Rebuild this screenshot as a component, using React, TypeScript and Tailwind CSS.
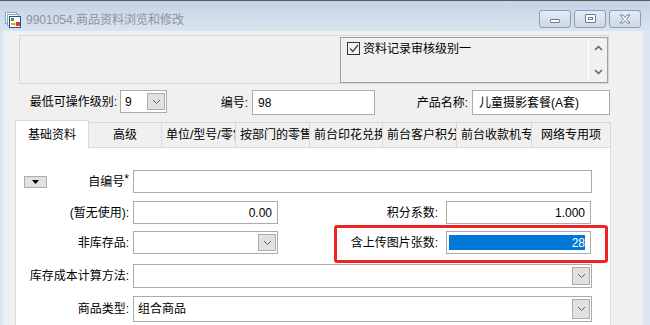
import React from "react";

const FONT = { fontFamily: '"Liberation Sans","Noto Sans CJK SC",sans-serif' };

function Chevron() {
  return (
    <svg width="9" height="6" viewBox="0 0 9 6">
      <polyline points="1,1 4.5,4.5 8,1" fill="none" stroke="#606060" strokeWidth="1" />
    </svg>
  );
}

function DropBtn() {
  return (
    <div className="absolute right-[1px] top-[2px] bottom-[2px] w-[18px] bg-[#e1e1e1] border border-[#acacac] flex items-center justify-center">
      <Chevron />
    </div>
  );
}

function Select({ w, h = "h-[23px]", value }: { w: string; h?: string; value?: string }) {
  return (
    <div className={`relative ${w} ${h} bg-white border border-[#ababab] flex items-center pl-[4px] text-[12px] text-black`}>
      {value}
      <DropBtn />
    </div>
  );
}

function TitleIcon() {
  return (
    <svg width="16" height="16" viewBox="0 0 16 16">
      <rect x="0.5" y="0.5" width="11" height="11" fill="#f4f7fb" stroke="#8ea3bd" />
      <rect x="2.5" y="2.5" width="11" height="11" fill="#f4f7fb" stroke="#8ea3bd" />
      <rect x="4.5" y="4.5" width="11" height="11" fill="#ffffff" stroke="#2a4f9a" />
      <rect x="6" y="6" width="3" height="3" fill="#3aa83a" />
      <path d="M6 11 L9 11 L9 9.5 L11 12 L9 14.5 L9 13 L6 13 Z" fill="#e0b020" />
      <rect x="11" y="10" width="4" height="4" fill="#d83a2a" />
    </svg>
  );
}

function WinBtn({ kind }: { kind: "min" | "max" | "close" }) {
  return (
    <div className="w-[32px] h-[18px] rounded-[3px] border border-[#8d9db2] bg-gradient-to-b from-[#e4ecf5] to-[#cdd9e7] flex items-center justify-center">
      {kind === "min" && <div className="w-[10px] h-[4px] bg-white border border-[#6f7a88] rounded-[1px] mt-[4px]" />}
      {kind === "max" && (
        <div className="w-[11px] h-[9px] bg-white border border-[#6f7a88] rounded-[1px] flex items-center justify-center">
          <div className="w-[5px] h-[3px] border border-[#6f7a88]" />
        </div>
      )}
      {kind === "close" && (
        <svg width="14" height="10" viewBox="0 0 14 10">
          <path d="M2 1 L5 1 L7 3.5 L9 1 L12 1 L8.5 5 L12 9 L9 9 L7 6.5 L5 9 L2 9 L5.5 5 Z" fill="#fff" stroke="#6f7a88" strokeWidth="0.9" />
        </svg>
      )}
    </div>
  );
}

const tabs: { t: string; w: string }[] = [
  { t: "基础资料", w: "w-[74px]" },
  { t: "高级", w: "w-[73px]" },
  { t: "单位/型号/零售价", w: "w-[74px]" },
  { t: "按部门的零售价", w: "w-[74px]" },
  { t: "前台印花兑换", w: "w-[73px]" },
  { t: "前台客户积分", w: "w-[74px]" },
  { t: "前台收款机专用", w: "w-[75px]" },
  { t: "网络专用项", w: "w-[79px]" },
];

export default function App() {
  return (
    <div style={FONT} className="w-[650px] h-[325px] overflow-hidden flex flex-col bg-[#dbe6f3] text-black">
      {/* Title bar */}
      <div className="h-[31px] shrink-0 border-t border-[#5c5c5c] bg-gradient-to-b from-[#c3d3e5] to-[#d9e4f1] flex items-center">
        <div className="ml-[5px] mt-[8px]">
          <TitleIcon />
        </div>
        <div className="ml-[5px] mt-[8px] text-[12px] text-[#8e9399] leading-none">9901054.商品资料浏览和修改</div>
        <div className="ml-auto mr-[9px] mt-[5px] flex gap-[3px]">
          <WinBtn kind="min" />
          <WinBtn kind="max" />
          <WinBtn kind="close" />
        </div>
      </div>

      {/* Body */}
      <div className="flex-1 flex">
        <div className="w-[3px] bg-[#dbe6f3]" />
        <div className="w-[640px] bg-[#f0f0f0] flex flex-col">
          {/* Group frame */}
          <div className="ml-[16px] mt-[4px] w-[590px] h-[49px] border border-[#d6d6d6] flex justify-end items-start pt-[1px]">
            <div className="w-[268px] h-[46px] border border-[#a0a0a0] flex bg-[#f0f0f0]">
              <div className="flex-1 flex items-start pt-[3px] pl-[6px]">
                <div className="w-[13px] h-[13px] border border-[#333] bg-[#f4f4f4] flex items-center justify-center mt-[1px]">
                  <svg width="10" height="9" viewBox="0 0 10 9">
                    <polyline points="1,4.5 3.8,7.5 9,1" fill="none" stroke="#444" strokeWidth="1.3" />
                  </svg>
                </div>
                <span className="ml-[3px] text-[12px] leading-[16px]">资料记录审核级别一</span>
              </div>
              <div className="w-[19px] border-l border-white flex flex-col items-center justify-between py-[7px]">
                <svg width="9" height="6" viewBox="0 0 9 6">
                  <polyline points="1,5 4.5,1.5 8,5" fill="none" stroke="#606060" strokeWidth="1.5" />
                </svg>
                <svg width="9" height="6" viewBox="0 0 9 6">
                  <polyline points="1,1 4.5,4.5 8,1" fill="none" stroke="#606060" strokeWidth="1.5" />
                </svg>
              </div>
            </div>
          </div>

          {/* Row 1 */}
          <div className="mt-[6px] flex items-start text-[12px]">
            <div className="w-[17px]" />
            <div className="w-[97px] h-[23px] flex items-center justify-end">最低可操作级别:</div>
            <div className="ml-[3px] relative w-[47px] h-[23px] bg-white border border-[#ababab] flex items-center pl-[4px]">
              9
              <DropBtn />
            </div>
            <div className="w-[81px] h-[25px] flex items-center justify-end">编号:</div>
            <div className="ml-[4px] w-[123px] h-[25px] bg-white border border-[#ababab] flex items-center pl-[5px]">98</div>
            <div className="w-[93px] h-[25px] flex items-center justify-end">产品名称:</div>
            <div className="ml-[4px] w-[138px] h-[25px] bg-white border border-[#ababab] flex items-center pl-[6px]">儿童摄影套餐(A套)</div>
          </div>

          {/* Tabs */}
          <div className="mt-[5px] ml-[12px] flex items-end text-[12px]">
            {tabs.map((tab, i) =>
              i === 0 ? (
                <div
                  key={i}
                  className={`${tab.w} h-[28px] -mb-px relative z-10 bg-white border border-b-0 border-[#d9d9d9] flex items-center justify-center whitespace-nowrap overflow-hidden`}
                >
                  {tab.t}
                </div>
              ) : (
                <div
                  key={i}
                  className={`${tab.w} h-[25px] bg-[#f0f0f0] border border-b-0 border-l-0 border-[#d9d9d9] leading-[25px] text-center px-[4px] whitespace-nowrap overflow-hidden`}
                >
                  {tab.t}
                </div>
              )
            )}
          </div>

          {/* Panel */}
          <div className="ml-[12px] w-[596px] flex-1 bg-white border border-b-0 border-[#d9d9d9] pt-[22px] text-[12px]">
            {/* Row A */}
            <div className="flex items-center h-[23px]">
              <div className="w-[113px] flex items-center">
                <div className="ml-[8px] w-[23px] h-[12px] bg-[#e1e1e1] border border-[#adadad] flex items-center justify-center">
                  <svg width="7" height="4" viewBox="0 0 7 4">
                    <polygon points="0,0 7,0 3.5,4" fill="#000" />
                  </svg>
                </div>
                <div className="flex-1 text-right">
                  自编号<span className="relative top-[-3px]">*</span>
                </div>
              </div>
              <div className="ml-[4px] w-[459px] h-[23px] bg-white border border-[#ababab]" />
            </div>

            {/* Row B */}
            <div className="mt-[8px] flex items-center h-[23px]">
              <div className="w-[113px] text-right">(暂无使用):</div>
              <div className="ml-[4px] w-[145px] h-[23px] bg-white border border-[#ababab] flex items-center justify-end pr-[5px]">0.00</div>
              <div className="w-[160px] text-right">积分系数:</div>
              <div className="ml-[8px] w-[145px] h-[23px] bg-white border border-[#ababab] flex items-center justify-end pr-[5px]">1.000</div>
            </div>

            {/* Row C */}
            <div className="mt-[7px] flex items-center h-[23px] relative">
              <div className="w-[113px] text-right">非库存品:</div>
              <div className="ml-[4px]">
                <Select w="w-[145px]" />
              </div>
              <div className="w-[160px] text-right">含上传图片张数:</div>
              <div className="ml-[8px] w-[145px] h-[23px] bg-white border border-[#ababab] pl-[2px] pr-[5px] py-[3px]">
                <div className="h-full bg-[#0078d7] text-white flex items-center justify-end">28</div>
              </div>
              <div className="absolute left-[318px] top-[-6px] w-[274px] h-[38px] border-[3px] border-[#ec2424] rounded-[3px]" />
            </div>

            {/* Row D */}
            <div className="mt-[10px] flex items-center h-[24px]">
              <div className="w-[113px] text-right">库存成本计算方法:</div>
              <div className="ml-[4px]">
                <Select w="w-[459px]" h="h-[24px]" />
              </div>
            </div>

            {/* Row E */}
            <div className="mt-[8px] flex items-center h-[26px]">
              <div className="w-[113px] text-right">商品类型:</div>
              <div className="ml-[4px]">
                <Select w="w-[459px]" h="h-[26px]" value="组合商品" />
              </div>
            </div>
          </div>
        </div>
        <div className="flex-1 bg-[#dbe6f3]" />
      </div>
    </div>
  );
}
